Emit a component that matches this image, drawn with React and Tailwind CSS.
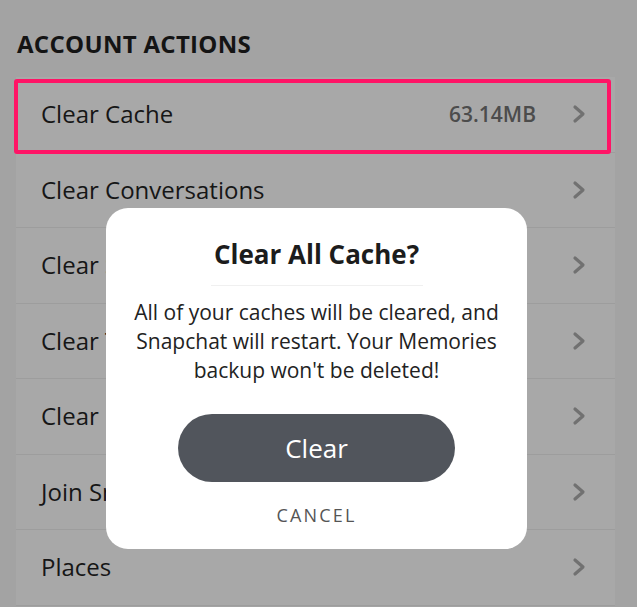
import React from "react";

const rows = [
  { label: "Clear Cache", value: "63.14MB" },
  { label: "Clear Conversations" },
  { label: "Clear Search History" },
  { label: "Clear Top Locations" },
  { label: "Clear Lens Data" },
  { label: "Join Snapchat Beta" },
  { label: "Places" },
];

function Chevron() {
  return (
    <svg width="14" height="20" viewBox="0 0 14 20" fill="none">
      <polyline
        points="3,3 11,10 3,17"
        stroke="#717171"
        strokeWidth="3.2"
        strokeLinecap="round"
        strokeLinejoin="round"
      />
    </svg>
  );
}

export default function App() {
  return (
    <div
      className="relative w-[637px] h-[607px] overflow-hidden bg-[#a3a3a3]"
      style={{ fontFamily: "'Open Sans', 'Noto Sans', sans-serif" }}
    >
      {/* settings list (dimmed) */}
      <div className="pt-[30px]">
        <h2 className="pl-[17px] text-[24px] leading-[28px] font-bold tracking-[0.3px] text-[#141414]">
          ACCOUNT ACTIONS
        </h2>
        <div className="mt-[19px] ml-[16px] w-[599px] bg-[#a8a8a8]">
          {rows.map((row) => (
            <div
              key={row.label}
              className="flex items-center h-[75.5px] pl-[25px] pr-[29px] border-b border-[#9d9d9d]"
            >
              <span className="flex-1 text-[24px] text-[#161616]">{row.label}</span>
              {row.value && (
                <span className="mr-[36px] text-[21px] font-semibold text-[#4c4c4c]">
                  {row.value}
                </span>
              )}
              <Chevron />
            </div>
          ))}
        </div>
      </div>

      {/* highlight box */}
      <div className="absolute left-[14px] top-[79px] w-[597px] h-[75px] border-[4px] border-[#ff1466] rounded-[3px]" />

      {/* dialog */}
      <div className="absolute left-[106px] top-[208px] w-[421px] h-[341px] bg-white rounded-[22px] flex flex-col items-center pt-[29px]">
        <h3 className="text-[26px] leading-[34px] font-bold text-[#1c1c1c]">
          Clear All Cache?
        </h3>
        <div className="mt-[14px] w-[212px] h-px bg-[#f0f0f0]" />
        <p className="mt-[12px] text-center text-[21px] leading-[29px] text-[#222]">
          All of your caches will be cleared, and
          <br />
          Snapchat will restart. Your Memories
          <br />
          backup won't be deleted!
        </p>
        <button className="mt-[29px] w-[277px] h-[68px] rounded-full bg-[#51555c] text-white text-[26px]">
          Clear
        </button>
        <div className="mt-[23px] text-[18px] leading-[20px] tracking-[2.2px] text-[#555]">
          CANCEL
        </div>
      </div>
    </div>
  );
}
